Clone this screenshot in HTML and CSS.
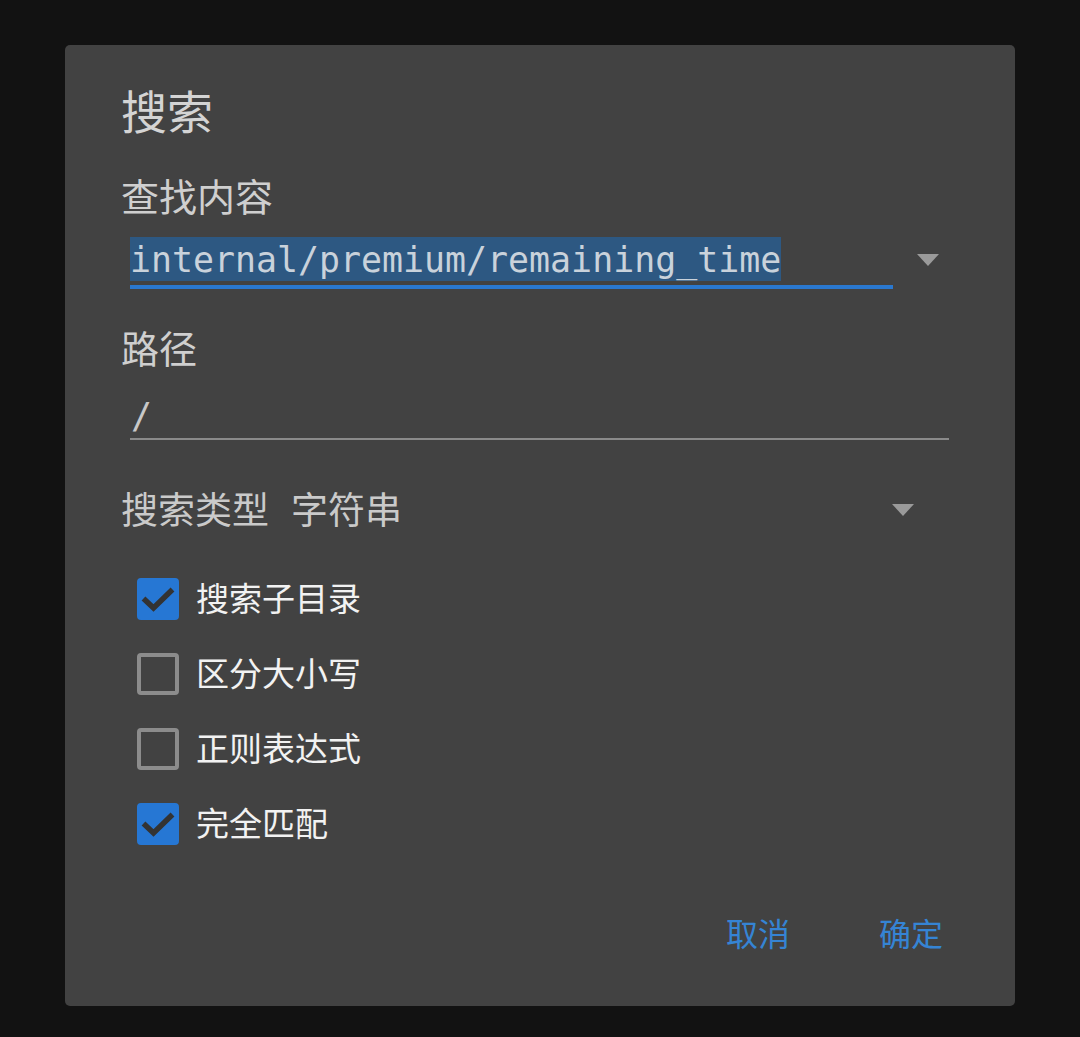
FILE: index.html
```html
<!DOCTYPE html>
<html lang="zh-CN">
<head>
<meta charset="utf-8">
<title>搜索</title>
<link rel="stylesheet" href="styles.css">
</head>
<body>
<div class="dialog">
  <div class="title">搜索</div>
  <div class="label label-find">查找内容</div>
  <div class="field-row">
    <div class="field field-find">
      <div class="field-text"><span class="selected">internal/premium/remaining_time</span></div>
      <div class="underline underline-active"></div>
    </div>
    <div class="arrow arrow-find"></div>
  </div>
  <div class="label label-path">路径</div>
  <div class="field field-path">
    <div class="field-text">/</div>
    <div class="underline"></div>
  </div>
  <div class="type-row">
    <span class="type-label">搜索类型</span>
    <span class="type-value">字符串</span>
    <div class="arrow arrow-type"></div>
  </div>
  <div class="checks">
    <div class="check-row">
      <span class="box checked"><svg viewBox="0 0 42 42" width="42" height="42"><path d="M6.5 20.5 L16.5 30 L35.5 11.5" fill="none" stroke="#333" stroke-width="5.5"/></svg></span>
      <span class="check-label">搜索子目录</span>
    </div>
    <div class="check-row">
      <span class="box"></span>
      <span class="check-label">区分大小写</span>
    </div>
    <div class="check-row">
      <span class="box"></span>
      <span class="check-label">正则表达式</span>
    </div>
    <div class="check-row">
      <span class="box checked"><svg viewBox="0 0 42 42" width="42" height="42"><path d="M6.5 20.5 L16.5 30 L35.5 11.5" fill="none" stroke="#333" stroke-width="5.5"/></svg></span>
      <span class="check-label">完全匹配</span>
    </div>
  </div>
  <div class="buttons">
    <span class="btn">取消</span>
    <span class="btn">确定</span>
  </div>
</div>
</body>
</html>
```

FILE: styles.css
```css
html, body {
  margin: 0;
  padding: 0;
}
body {
  background: #121212;
  width: 1080px;
  height: 1037px;
  overflow: hidden;
  font-family: "Noto Sans CJK SC", "Noto Sans", sans-serif;
}
.dialog {
  margin: 45px 0 0 65px;
  width: 950px;
  height: 961px;
  background: #424242;
  border-radius: 5px;
  box-sizing: border-box;
  padding: 32px 72px 0 56px;
  display: flex;
  flex-direction: column;
}
.title {
  height: 64px;
  line-height: 64px;
  font-size: 46px;
  color: #d4d4d4;
}
.label {
  height: 44px;
  line-height: 44px;
  font-size: 38px;
  color: #cfcfcf;
}
.label-find { margin-top: 32px; }
.label-path { margin-top: 36px; }
.field-row {
  margin-top: 20px;
  display: flex;
  align-items: flex-start;
}
.field {
  margin-left: 9px;
}
.field-find {
  width: 763px;
}
.field-text {
  height: 44px;
  line-height: 46px;
  font-family: "DejaVu Sans Mono", "Liberation Mono", monospace;
  font-size: 34.9px;
  color: #c9d2db;
  white-space: nowrap;
}
.selected {
  display: inline-block;
  height: 44px;
  background: #2d5882;
}
.underline {
  height: 2px;
  background: #8a8a8a;
  margin-top: 1px;
}
.underline-active {
  height: 4px;
  margin-top: 4px;
  background: #2a78cf;
}
.arrow {
  width: 0;
  height: 0;
  border-left: 11px solid transparent;
  border-right: 11px solid transparent;
  border-top: 12px solid #9a9a9a;
}
.arrow-find {
  margin-left: 24px;
  margin-top: 17px;
}
.field-path {
  margin-top: 24px;
  width: 819px;
}
.field-path .field-text {
  color: #c8c8c8;
  padding-left: 1px;
}
.type-row {
  margin-top: 47px;
  height: 44px;
  line-height: 44px;
  display: flex;
  align-items: center;
  font-size: 37px;
  color: #cacaca;
}
.type-label, .type-value {
  position: relative;
  top: -1px;
}
.type-value {
  margin-left: 22px;
}
.arrow-type {
  margin-left: auto;
  margin-right: 29px;
  margin-top: 2px;
}
.checks {
  margin-top: 30px;
  display: flex;
  flex-direction: column;
}
.check-row {
  height: 75px;
  display: flex;
  align-items: center;
  padding-left: 16px;
}
.box {
  width: 42px;
  height: 42px;
  box-sizing: border-box;
  border: 4px solid #8c8c8c;
  border-radius: 4px;
  display: block;
  position: relative;
}
.box.checked {
  background: #2677d4;
  border-color: #2677d4;
}
.box svg {
  position: absolute;
  left: -4px;
  top: -4px;
}
.check-label {
  margin-left: 17px;
  font-size: 33px;
  color: #f2f2f2;
  line-height: 44px;
  position: relative;
  top: -2px;
}
.buttons {
  margin-top: 49px;
  height: 44px;
  display: flex;
  justify-content: flex-end;
  gap: 89px;
}
.btn {
  font-size: 32px;
  line-height: 44px;
  color: #3584d4;
}
```
